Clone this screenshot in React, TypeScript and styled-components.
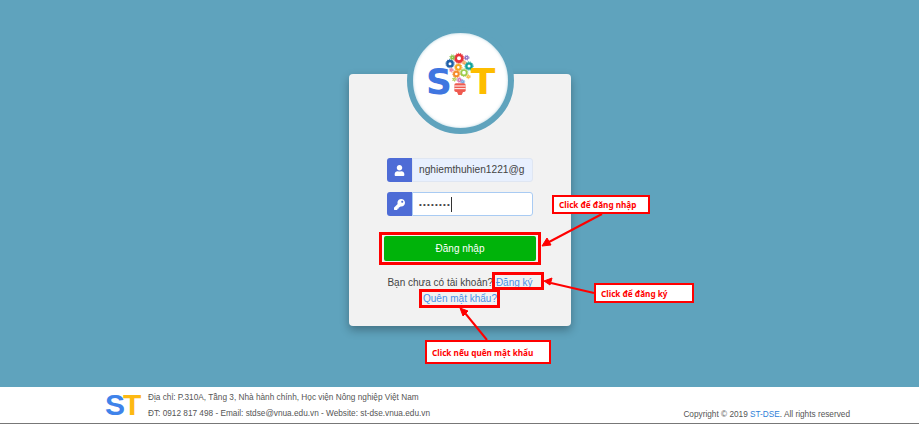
import React from 'react';
import styled, { createGlobalStyle } from 'styled-components';
import { FaUser, FaKey } from 'react-icons/fa';

const gears = [
	{ x: 330, y: 131, r: 8, w: 7, c: '#1f5fa8' },
	{ x: 357, y: 115, r: 10, w: 8, c: '#e8343a' },
	{ x: 387, y: 138, r: 8, w: 7, c: '#12a39a' },
	{ x: 355, y: 142, r: 7, w: 6, c: '#f7a823' },
	{ x: 372, y: 158, r: 8, w: 5, c: '#9ccc4a' },
	{ x: 349, y: 162, r: 7, w: 6, c: '#f58a2a' },
	{ x: 337, y: 112, r: 4, w: 5, c: '#8bc34a' },
	{ x: 380, y: 113, r: 4, w: 4, c: '#8e6fc4' },
	{ x: 358, y: 180, r: 4, w: 4, c: '#d56bb0' },
	{ x: 343, y: 178, r: 3, w: 4, c: '#b9cf5c' },
	{ x: 334, y: 150, r: 3, w: 4, c: '#ef7fa0' },
	{ x: 385, y: 170, r: 3, w: 4, c: '#f4c04a' },
	{ x: 372, y: 128, r: 3, w: 4, c: '#f2a65a' },
	{ x: 368, y: 185, r: 3, w: 4, c: '#7aa7e0' },
];

const LogoMark = () => (
	<svg width='95' height='95' viewBox='219 39 285 285'>
		{gears.map((g) => (
			<g key={`${g.x}-${g.y}`} fill='none' stroke={g.c}>
				<circle cx={g.x} cy={g.y} r={g.r} strokeWidth={g.w} />
				<circle cx={g.x} cy={g.y} r={g.r + g.w / 2 + 1} strokeWidth='3' strokeDasharray='3 3' />
			</g>
		))}
		<rect x='343' y='190' width='34' height='26' rx='5' fill='#ef5a50' />
		<path d='M343 198h34M343 206h34' stroke='#fff' strokeWidth='3' />
		<path d='M351 216h18l-4 9h-10z' fill='#ef5a50' />
		<text x='258' y='221' fontFamily='"DejaVu Sans", sans-serif' fontWeight='700' fontSize='108' fill='#3f76e0'>
			S
		</text>
		<text x='392' y='223' fontFamily='"DejaVu Sans", sans-serif' fontWeight='700' fontSize='108' fill='#fdbd00'>
			T
		</text>
	</svg>
);

const App = () => {
	return (
		<Page>
			<GlobalStyle />
			<Main>
				<Card>
					<LogoCircle>
						<LogoMark />
					</LogoCircle>
					<Fields>
						<Field>
							<Prepend>
								<FaUser size={11} />
							</Prepend>
							<Autofilled>nghiemthuhien1221@g</Autofilled>
						</Field>
						<Field>
							<Prepend>
								<FaKey size={11} />
							</Prepend>
							<Focused>
								<Dots>••••••••</Dots>
								<Caret />
							</Focused>
						</Field>
					</Fields>
					<Submit>Đăng nhập</Submit>
					<Links>
						<LinkLine>
							Bạn chưa có tài khoản? <Anchor>Đăng ký</Anchor>
						</LinkLine>
						<LinkLine>
							<Anchor>Quên mật khẩu?</Anchor>
						</LinkLine>
					</Links>
				</Card>
			</Main>
			<Footer>
				<Brand>
					<BrandS>S</BrandS>
					<BrandT>T</BrandT>
				</Brand>
				<Contact>
					<span>Địa chỉ: P.310A, Tầng 3, Nhà hành chính, Học viện Nông nghiệp Việt Nam</span>
					<span>ĐT: 0912 817 498 - Email: stdse@vnua.edu.vn - Website: st-dse.vnua.edu.vn</span>
				</Contact>
				<Copyright>
					Copyright © 2019 <FooterLink>ST-DSE</FooterLink>. All rights reserved
				</Copyright>
			</Footer>

			{/* red annotations drawn on top of the screenshot */}
			<Frame $x={379} $y={232} $w={162} $h={33} />
			<Frame $x={492} $y={272} $w={52} $h={18} />
			<Frame $x={419} $y={289} $w={81} $h={19} />
			<Note $x={552} $y={195} $w={98} $h={19}>Click để đăng nhập</Note>
			<Note $x={594} $y={283} $w={100} $h={20}>Click để đăng ký</Note>
			<Note $x={425} $y={340} $w={126} $h={24}>Click nếu quên mật khẩu</Note>
			<Arrows width='919' height='424' viewBox='0 0 919 424'>
				<g stroke='#f00' strokeWidth='2' fill='#f00'>
					<path d='M602 214L549 242' />
					<path d='M542 246l5-8 4 7z' strokeWidth='1' />
					<path d='M594 293L551 283' />
					<path d='M544 281l8-3-2 7z' strokeWidth='1' />
					<path d='M487 340L465 313' />
					<path d='M460 308l8 3-5 5z' strokeWidth='1' />
				</g>
			</Arrows>
		</Page>
	);
};

const GlobalStyle = createGlobalStyle`
	html, body {
		margin: 0;
		padding: 0;
		background: #5fa3bd;
	}
	* {
		box-sizing: border-box;
	}
`;

const Page = styled.div`
	position: relative;
	width: 919px;
	height: 424px;
	overflow: hidden;

	color: #444;
	font-family: 'Liberation Sans', sans-serif;

	display: flex;
	flex-direction: column;
`;

const Main = styled.main`
	height: 387px;
	padding-top: 74px;
	padding-left: 1px;

	display: flex;
	justify-content: center;
`;

const Card = styled.section`
	position: relative;
	width: 222px;
	height: 252px;
	padding-top: 84px;

	background-color: #f2f2f2;
	border-radius: 4px;
	box-shadow: 0 4px 10px rgba(0, 0, 0, 0.3);

	display: flex;
	flex-direction: column;
	align-items: center;
`;

const LogoCircle = styled.div`
	position: absolute;
	top: -47px;
	left: 58px;
	width: 107px;
	height: 107px;

	background-color: #fff;
	border: 6px solid #5fa3bd;
	border-radius: 50%;
	box-shadow: inset 0 0 3px rgba(95, 163, 189, 0.5);
`;

const Fields = styled.div`
	width: 146px;

	display: flex;
	flex-direction: column;
	gap: 10px;
`;

const Field = styled.div`
	display: flex;
	height: 24px;
`;

const Prepend = styled.span`
	width: 25px;
	flex-shrink: 0;

	color: #fff;
	background-color: #4e6cd6;
	border-radius: 3px 0 0 3px;

	display: flex;
	align-items: center;
	justify-content: center;
`;

const Autofilled = styled.div`
	flex: 1;
	padding-left: 6px;

	color: #444;
	background-color: #e8f0fe;
	border: 1px solid #dfe6f2;
	border-radius: 0 3px 3px 0;

	font-size: 10.2px;
	line-height: 22px;
	white-space: nowrap;
`;

const Focused = styled.div`
	flex: 1;
	padding-left: 6px;

	background-color: #fff;
	border: 1px solid #a9cbf3;
	border-radius: 0 3px 3px 0;

	display: flex;
	align-items: center;
`;

const Dots = styled.span`
	color: #444;
	font-size: 8px;
	letter-spacing: 1.2px;
`;

const Caret = styled.i`
	width: 1px;
	height: 15px;
	background-color: #333;
`;

const Submit = styled.button`
	width: 152px;
	height: 25px;
	margin-top: 20px;
	padding: 0;

	color: #fff;
	background-color: #00b30a;
	border: 0;
	border-radius: 2px;

	font-family: inherit;
	font-size: 10px;
`;

const Links = styled.div`
	margin-top: 14px;

	font-size: 10px;
	text-align: center;

	display: flex;
	flex-direction: column;
`;

const LinkLine = styled.p`
	margin: 0;
	line-height: 16px;
	white-space: nowrap;
`;

const Anchor = styled.a`
	color: #4a90e8;
`;

const Footer = styled.footer`
	position: relative;
	height: 37px;
	padding-left: 105px;

	background-color: #fff;
	border-bottom: 1px solid #777;

	display: flex;
	align-items: center;
	gap: 9px;
`;

const Brand = styled.div`
	width: 34px;
	font-size: 30px;
	font-weight: 700;
	line-height: 1;
	letter-spacing: -2px;
	white-space: nowrap;
`;

const BrandS = styled.span`
	color: #3f83ea;
`;

const BrandT = styled.span`
	color: #fdb913;
`;

const Contact = styled.address`
	color: #555;
	font-size: 8.25px;
	font-style: normal;

	display: flex;
	flex-direction: column;
	gap: 7px;
`;

const Copyright = styled.div`
	position: absolute;
	right: 69px;
	bottom: 4px;

	color: #555;
	font-size: 8.25px;
`;

const FooterLink = styled.a`
	color: #2f7fd8;
`;

type BoxProps = { $x: number; $y: number; $w: number; $h: number };

const Frame = styled.div<BoxProps>`
	position: absolute;
	left: ${(p) => p.$x}px;
	top: ${(p) => p.$y}px;
	width: ${(p) => p.$w}px;
	height: ${(p) => p.$h}px;

	border: 3px solid #f00;
`;

const Note = styled(Frame)`
	padding-left: 5px;

	color: #f00;
	background-color: #fff;
	border-width: 2px;

	font-family: 'Noto Sans', sans-serif;
	font-size: 8.2px;
	font-weight: 700;
	white-space: nowrap;

	display: flex;
	align-items: center;
`;

const Arrows = styled.svg`
	position: absolute;
	top: 0;
	left: 0;
	pointer-events: none;
`;

export default App;
